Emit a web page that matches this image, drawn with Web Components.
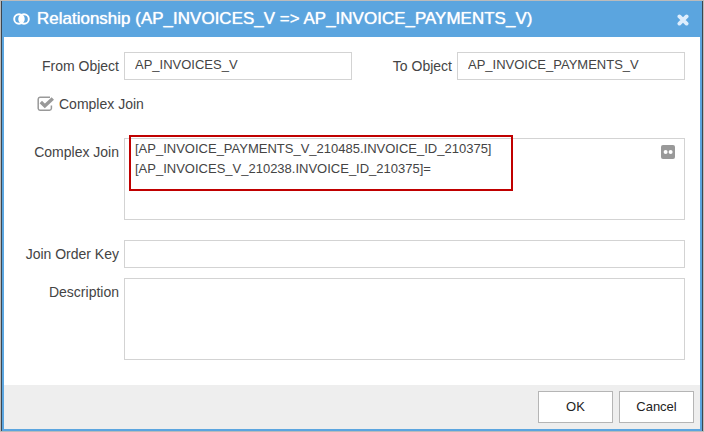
<!DOCTYPE html>
<html lang="en">
<head>
<meta charset="utf-8">
<title>Relationship</title>
<style>
html, body { height: 100%; }
body { margin: 0; font: 14px/20px "Liberation Sans", Arial, sans-serif; color: #444; background: #fff; }
</style>
</head>
<body>
<relationship-dialog></relationship-dialog>
<script>
const define = (name, html, setup) => customElements.define(name, class extends HTMLElement {
  constructor() {
    super();
    this.attachShadow({ mode: 'open' }).innerHTML = '<style>*{box-sizing:border-box}</style>' + html;
  }
  connectedCallback() { if (setup) setup(this, this.shadowRoot); }
});

define('title-bar', `
<style>
:host { display: flex; align-items: center; gap: 7px; height: 36px; flex: none; padding: 0 11px 0 9px; background: #5ba5df; color: #fff; }
h1 { flex: 1; margin: 0; font-size: 17px; line-height: 20px; font-weight: normal; text-shadow: 0 0 1px #fff; white-space: nowrap; }
button { display: flex; margin: 2px 0 0; padding: 0; border: 0; background: none; }
svg { display: block; flex: none; }
</style>
<svg width="17" height="12" viewBox="0 0 17 12" fill="none" stroke="#fff" stroke-width="1.9"><circle cx="6" cy="6" r="4.8"/><circle cx="11" cy="6" r="4.8"/><path d="M8.5 2.1a4.8 4.8 0 0 1 0 7.8a4.8 4.8 0 0 1 0-7.8z" fill="#fff" stroke="none"/></svg>
<h1><slot></slot></h1>
<button type="button" aria-label="Close"><svg width="12" height="12" viewBox="0 0 12 12" stroke="#deeefd" stroke-width="3.8" stroke-linecap="round"><path d="M2.4 2.4l7.2 7.2M9.6 2.4l-7.2 7.2"/></svg></button>`);

define('form-field', `
<style>
:host { display: flex; gap: 5px; flex: 1; min-width: 0; }
label { flex: none; width: var(--label-width, 115px); padding-top: 4px; text-align: right; white-space: nowrap; }
.box { position: relative; display: flex; flex: 1; min-width: 0; }
input, textarea { display: block; width: 100%; min-width: 0; margin: 0; border: 1px solid #d3d3d3; border-radius: 0; background: #fff; font: inherit; font-size: 13px; color: inherit; outline: 0; }
input { height: 28px; padding: 0 10px 4px; }
textarea { height: 82px; padding: 0 10px; resize: none; overflow: hidden; }
</style>
<label for="control"></label><div class="box"><slot></slot></div>`, (host, root) => {
  if (root.querySelector('#control')) return;
  const lines = host.hasAttribute('multiline');
  const control = document.createElement(lines ? 'textarea' : 'input');
  control.id = 'control';
  control.spellcheck = false;
  control.value = host.getAttribute('value') || '';
  root.querySelector('label').textContent = host.getAttribute('label');
  root.querySelector('.box').prepend(control);
});

define('check-field', `
<style>
:host { display: flex; padding-left: 33px; }
label { position: relative; display: flex; align-items: center; gap: 4px; }
input { appearance: none; width: 18px; height: 16px; margin: 0; }
svg { position: absolute; left: 0; top: 2px; pointer-events: none; }
path { fill: none; stroke: #999; }
input:not(:checked) ~ svg .tick { display: none; }
</style>
<label><input type="checkbox" checked><svg width="18" height="16" viewBox="0 0 18 16"><path stroke-width="1.5" d="M13 1.2H3A2 2 0 0 0 1.2 3V12.5A2 2 0 0 0 3 14.3H12.5A2 2 0 0 0 14.4 12.5V9.5"/><path class="tick" stroke-width="3.4" d="M3.8 6L7.8 10L15.8 2.4"/></svg><slot></slot></label>`);

define('more-button', `
<style>
:host { position: absolute; top: 7px; right: 10px; }
button { display: block; padding: 0; border: 0; background: none; }
svg { display: block; }
</style>
<button type="button" aria-label="Edit expression"><svg width="14" height="14" viewBox="0 0 14 14"><rect width="14" height="14" rx="2" fill="#999"/><circle cx="4.6" cy="7" r="2" fill="#fff"/><circle cx="9.6" cy="7" r="2" fill="#fff"/></svg></button>`);

define('highlight-frame', `
<style>
:host { position: absolute; left: 5px; top: -3px; width: 384px; height: 56px; box-sizing: border-box; border: 2px solid #c00000; pointer-events: none; }
</style>`);

define('dialog-button', `
<style>
:host { display: block; }
button { width: 75px; height: 32px; padding: 0; border: 1px solid #b5b5b5; border-radius: 0; background: #fff; color: #222; font: 13px/20px "Liberation Sans", Arial, sans-serif; }
</style>
<button type="button"><slot></slot></button>`);

define('relationship-dialog', `
<style>
:host { display: flex; min-height: 100%; box-sizing: border-box; border: 1px solid #bbb; }
.shell { display: flex; flex: 1; min-width: 0; border: solid #3b4650; border-width: 0 1px; }
.dialog { display: flex; flex-direction: column; flex: 1; min-width: 0; border: 2px solid #5ba5df; border-top: 0; }
form { flex: 1; padding: 15px 15px 0 0; }
.row { display: flex; }
.second { --label-width: 100px; flex-basis: 105px; }
.first { flex-basis: 120px; }
check-field { margin: 14px 0 24px; }
.join { margin: 20px 0 10px; }
footer { display: flex; justify-content: flex-end; gap: 6px; padding: 6px; background: #eee; }
</style>
<div class="shell"><div class="dialog">
<title-bar>Relationship (AP_INVOICES_V =&gt; AP_INVOICE_PAYMENTS_V)</title-bar>
<form>
<div class="row"><form-field class="first" label="From Object" value="AP_INVOICES_V"></form-field><form-field class="second" label="To Object" value="AP_INVOICE_PAYMENTS_V"></form-field></div>
<check-field>Complex Join</check-field>
<form-field multiline label="Complex Join" value="[AP_INVOICE_PAYMENTS_V_210485.INVOICE_ID_210375]&#10;[AP_INVOICES_V_210238.INVOICE_ID_210375]="><more-button></more-button><highlight-frame></highlight-frame></form-field>
<form-field class="join" label="Join Order Key"></form-field>
<form-field multiline label="Description"></form-field>
</form>
<footer><dialog-button>OK</dialog-button><dialog-button>Cancel</dialog-button></footer>
</div></div>`);
</script>
<style>relationship-dialog { height: 100%; }</style>
</body>
</html>
